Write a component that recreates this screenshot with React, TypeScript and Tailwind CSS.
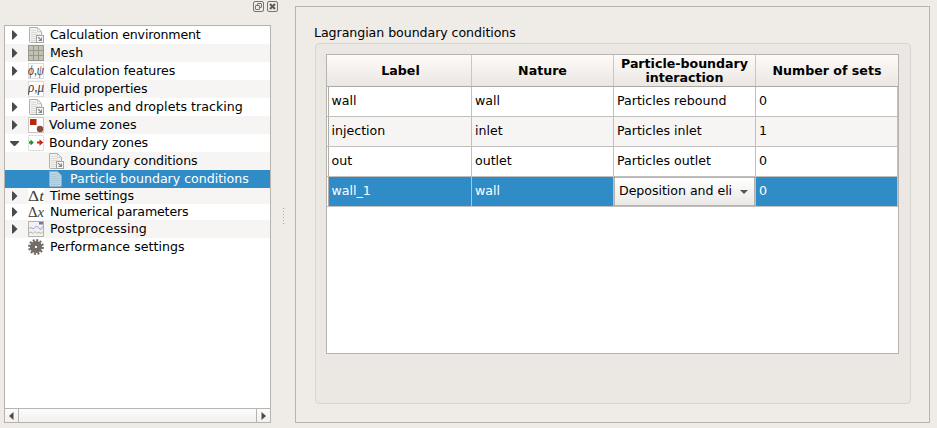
import React from "react";

const serif = "'Liberation Serif', 'DejaVu Serif', serif";

function Doc({ link = false, tinted = false }: { link?: boolean; tinted?: boolean }) {
  const edge = tinted ? "#88b0c9" : "#b0b1ad";
  return (
    <svg width="16" height="16" viewBox="0 0 16 16">
      <path
        d="M1.5 .5H9.5L13.5 4.5V14.5Q13.5 15.5 12.5 15.5H2.5Q1.5 15.5 1.5 14.5Z"
        fill={tinted ? "#b9d3e2" : "#f1f1ef"}
        stroke={edge}
      />
      <path d="M9.5 1V4.5H13Z" fill={tinted ? "#dbe8ef" : "#fff"} stroke={edge} strokeWidth=".5" />
      <path
        d="M3 3.5H8M3 5.5H9M3 7.5H12M3 9.5H12M3 11.5H12M3 13.5H12"
        stroke={tinted ? "#a9c8d9" : "#dcdcd9"}
      />
      {link && (
        <>
          <rect x="8.5" y="8.5" width="7" height="7" fill="#fafafa" stroke="#a3a4a1" />
          <path d="M10 10L13 13M13.5 10.5V13.5H10.5" fill="none" stroke="#858784" strokeWidth="1.1" />
        </>
      )}
    </svg>
  );
}

function MeshIcon() {
  return (
    <svg width="16" height="16" viewBox="0 0 16 16" shapeRendering="crispEdges">
      <rect width="16" height="16" fill="#c3c0b4" />
      <path d="M0 .5H16M0 5.5H16M0 10.5H16M0 15.5H16M.5 0V16M5.5 0V16M10.5 0V16M15.5 0V16" stroke="#99968b" />
    </svg>
  );
}

function Symbols({ text, boxed = false, size, y, plainFirst = false }: {
  text: string; boxed?: boolean; size: number; y: number; plainFirst?: boolean;
}) {
  return (
    <svg width="16" height="16" viewBox="0 0 16 16" className="opacity-95">
      <rect x=".5" y=".5" width="15" height="15" fill="#fff" stroke={boxed ? "#dadada" : "#fff"} />
      <text x="0" y={y} fontFamily={serif} fontSize={size} fill="#333" fontStyle="italic" textLength="16" lengthAdjust="spacingAndGlyphs">
        {plainFirst ? <tspan fontStyle="normal">{text[0]}</tspan> : text[0]}
        {text.slice(1)}
      </text>
    </svg>
  );
}

function VolumeIcon() {
  return (
    <svg width="16" height="16" viewBox="0 0 16 16">
      <rect x=".5" y=".5" width="15" height="15" fill="#fff" stroke="#c9c9c9" />
      <rect x="2" y="2" width="6.5" height="6" fill="#b92807" />
      <circle cx="12" cy="12" r="3.2" fill="#884a3d" />
    </svg>
  );
}

function BoundaryIcon() {
  return (
    <svg width="16" height="16" viewBox="0 0 16 16">
      <rect x=".5" y=".5" width="15" height="15" fill="#fff" stroke="#cfcfcf" strokeDasharray="2 1" />
      <path d="M1 6.5H2.5V4.5L5.8 7.5L2.5 10.5V8.5H1Z" fill="#159020" />
      <path d="M9 6.5H11.5V4.2L15.3 7.5L11.5 10.8V8.5H9Z" fill="#c22a10" />
    </svg>
  );
}

function PostIcon() {
  return (
    <svg width="16" height="16" viewBox="0 0 16 16">
      <rect x=".5" y=".5" width="15" height="15" fill="#f1f1f1" stroke="#b4b4b4" />
      <rect x="11" y="1" width="4" height="2.5" fill="#777696" />
      <path d="M1 7.5L3 6.5L5 8L7 6.5L9 5L11 7.5L13 8.5L15 5" fill="none" stroke="#a5a0df" />
      <path d="M1 12L3 11L5 12.5L7 10.5L9 12.5L11 11L13 12.5L15 10.5" fill="none" stroke="#a7bc9f" />
    </svg>
  );
}

function GearIcon() {
  return (
    <svg width="16" height="16" viewBox="0 0 16 16">
      <circle cx="8" cy="8" r="6.6" fill="none" stroke="#756b67" strokeWidth="2.6" strokeDasharray="2 1.456" />
      <circle cx="8" cy="8" r="3.6" fill="none" stroke="#756b67" strokeWidth="5" />
      <circle cx="8" cy="8" r="1.1" fill="#fff" />
    </svg>
  );
}

type Item = {
  label: string; icon: React.ReactNode; h?: string; spacing?: string;
  arrow?: "right" | "down"; child?: boolean; selected?: boolean;
};

const items: Item[] = [
  { label: "Calculation environment", icon: <Doc link />, arrow: "right", spacing: "tracking-[-0.17px]" },
  { label: "Mesh", icon: <MeshIcon />, arrow: "right" },
  { label: "Calculation features", icon: <Symbols text="ϕ,ψ" boxed size={14} y={11.5} />, arrow: "right", spacing: "tracking-[-0.05px]" },
  { label: "Fluid properties", icon: <Symbols text="ρ,μ" boxed size={15} y={11} />, spacing: "tracking-[-0.06px]" },
  { label: "Particles and droplets tracking", icon: <Doc link />, arrow: "right", spacing: "tracking-[0.04px]" },
  { label: "Volume zones", icon: <VolumeIcon />, arrow: "right", spacing: "-ml-px" },
  { label: "Boundary zones", icon: <BoundaryIcon />, arrow: "down", spacing: "-ml-px tracking-[-0.17px]" },
  { label: "Boundary conditions", icon: <Doc link />, child: true, spacing: "tracking-[-0.1px]" },
  { label: "Particle boundary conditions", icon: <Doc tinted />, child: true, selected: true, spacing: "tracking-[-0.02px]" },
  { label: "Time settings", icon: <Symbols text="Δt" plainFirst size={14} y={13} />, arrow: "right", h: "h-4", spacing: "tracking-[-0.08px]" },
  { label: "Numerical parameters", icon: <Symbols text="Δx" plainFirst size={14} y={13} />, arrow: "right", h: "h-4", spacing: "tracking-[-0.14px]" },
  { label: "Postprocessing", icon: <PostIcon />, arrow: "right", spacing: "tracking-[0.2px]" },
  { label: "Performance settings", icon: <GearIcon />, spacing: "tracking-[0.03px]" },
];

function Tree() {
  return (
    <div className="flex h-[398px] w-[267px] flex-col border border-[#b6b3b0] bg-white">
      <div className="flex-1">
        {items.map((it, i) => (
          <div
            key={it.label}
            className={`flex items-center ${it.h ?? "h-[18px]"} ${
              it.selected ? "bg-[#308cc6] text-white" : i % 2 ? "bg-[#f6f5f4]" : "bg-white"
            }`}
          >
            <div className={`shrink-0 pl-[5px] ${it.child ? "w-[43px]" : "w-[23px]"}`}>
              {it.arrow && (
                <svg width="11" height="10" viewBox="0 0 11 10">
                  <path d={it.arrow === "right" ? "M2 .5H3L7.5 5L3 9.5H2Z" : "M0 3H9V4L5 8H4L0 4Z"} fill="#4b4b4b" />
                </svg>
              )}
            </div>
            <div className="w-[22px] shrink-0">{it.icon}</div>
            <span className={`whitespace-nowrap leading-4 ${it.spacing ?? ""}`}>{it.label}</span>
          </div>
        ))}
      </div>
      <div className="flex h-3.5 border-t border-[#b6b3b0] bg-gradient-to-b from-[#fdfcfc] to-[#f1f0ed]">
        <div className="flex w-3.5 items-center justify-center border-r border-[#b6b3b0]">
          <svg width="5" height="8"><path d="M4.5 0V8L0 4Z" fill="#4b4b4b" /></svg>
        </div>
        <div className="flex-1" />
        <div className="flex w-3.5 items-center border-l border-[#b6b3b0] pl-1">
          <svg width="5" height="8"><path d="M.5 0V8L5 4Z" fill="#4b4b4b" /></svg>
        </div>
      </div>
    </div>
  );
}

function DockButtons() {
  return (
    <div className="flex h-[25px] justify-end gap-[3px] pr-px pt-px">
      <svg width="11" height="11" viewBox="0 0 11 11" fill="none" stroke="#77746f">
        <rect x=".5" y=".5" width="10" height="10" rx="1.5" />
        <rect x="4.5" y="2.5" width="4" height="4" rx=".5" />
        <rect x="2.5" y="4.5" width="4" height="4" rx=".5" fill="#efebe7" />
      </svg>
      <svg width="11" height="11" viewBox="0 0 11 11" fill="none" stroke="#77746f">
        <rect x=".5" y=".5" width="10" height="10" rx="1.5" />
        <path d="M3 3L8 8M8 3L3 8" stroke="#5f5c57" strokeWidth="2" />
      </svg>
    </div>
  );
}

const rows = [
  ["wall", "wall", "Particles rebound", "0"],
  ["injection", "inlet", "Particles inlet", "1"],
  ["out", "outlet", "Particles outlet", "0"],
  ["wall_1", "wall", "Deposition and eli", "0"],
];

function Table() {
  return (
    <div className="h-[300px] w-[573px] border border-[#b6b3b0] bg-white">
      <div className="grid h-8 grid-cols-[145px_142px_142px_142px] border-b border-[#aba8a5] bg-gradient-to-b from-[#fdfaf8] to-[#eae7e3] text-center font-bold leading-[14px]">
        {["Label", "Nature", "Particle-boundary interaction", "Number of sets"].map((h, i) => (
          <div
            key={h}
            className={`flex items-center justify-center ${i < 3 ? "border-r border-[#cac7c4]" : ""} ${i === 0 ? "pl-[3px]" : ""}`}
          >
            <span>{h}</span>
          </div>
        ))}
      </div>
      {rows.map((r, i) => (
        <div key={r[0]} className="flex h-[30px]">
          <div className="w-0.5 border-b border-r border-b-[#c2c0be] border-r-[#b0adab]" />
          <div className={`grid grid-cols-[143px_142px_142px_142px] ${i === 3 ? "bg-[#308cc6] text-white" : i % 2 ? "bg-[#f6f5f4]" : "bg-white"}`}>
            {r.map((c, j) => (
              <div key={j} className="flex border-b border-r border-[#c2c0be]">
                {i === 3 && j === 2 ? (
                  <div className="flex w-full items-center justify-between rounded-[1px] border border-[#b6b3b0] bg-gradient-to-b from-white to-[#ebe9e6] pl-1 pr-1.5 text-black">
                    <span className="whitespace-nowrap tracking-[-0.04px]">{c}</span>
                    <svg width="8" height="4"><path d="M0 0H8L4 4Z" fill="#555" /></svg>
                  </div>
                ) : (
                  <span className={`whitespace-nowrap pt-1.5 leading-4 ${j === 0 ? "pl-[2.5px]" : "pl-[3px]"}`}>{c}</span>
                )}
              </div>
            ))}
          </div>
        </div>
      ))}
    </div>
  );
}

export default function App() {
  return (
    <div className="flex h-[428px] w-[937px] overflow-hidden bg-[#efebe7] font-['DejaVu_Sans',sans-serif] text-[12.6px] text-black">
      <div className="w-[279px] pl-1">
        <DockButtons />
        <Tree />
      </div>
      <div className="flex w-4 flex-col gap-0.5 pl-1 pt-[208px]">
        {[0, 1, 2, 3, 4, 5].map((n) => (
          <i key={n} className="size-px shrink-0 bg-[#aaa7a4]" />
        ))}
      </div>
      <div className="mt-1.5 h-[417px] w-[635px] border border-[#b6b3b0] pl-[18px] pt-[18px]">
        <div className="h-[18px] leading-4 tracking-[-0.06px]">Lagrangian boundary conditions</div>
        <div className="ml-px h-[361px] w-[596px] rounded-sm border border-[#d8d4d1] bg-[#ebe7e3] pl-2.5 pt-2.5">
          <Table />
        </div>
      </div>
    </div>
  );
}
